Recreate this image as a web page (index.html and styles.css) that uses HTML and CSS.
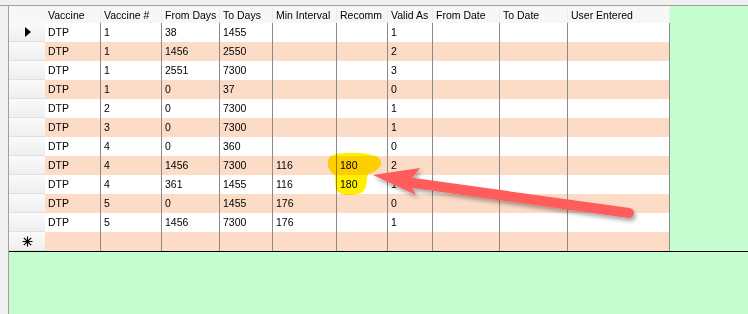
FILE: index.html
```html
<!DOCTYPE html>
<html>
<head>
<meta charset="utf-8">
<link rel="stylesheet" href="styles.css">
</head>
<body>
<div class="window">
  <div class="top-strip"></div>
  <div class="body">
    <div class="left-strip"></div>
    <div class="content">
      <div class="gridwrap">
        <div class="grid">
          <div class="row head">
            <div class="rh corner"></div>
            <div class="hc">Vaccine</div><div class="hc">Vaccine #</div><div class="hc">From Days</div><div class="hc">To Days</div><div class="hc">Min Interval</div><div class="hc">Recomm</div><div class="hc">Valid As</div><div class="hc">From Date</div><div class="hc">To Date</div><div class="hc">User Entered</div>
          </div>
          <div class="row"><div class="rh"><span class="tri"></span></div><div class="c">DTP</div><div class="c">1</div><div class="c">38</div><div class="c">1455</div><div class="c"></div><div class="c"></div><div class="c">1</div><div class="c"></div><div class="c"></div><div class="c"></div></div>
          <div class="row alt"><div class="rh"></div><div class="c">DTP</div><div class="c">1</div><div class="c">1456</div><div class="c">2550</div><div class="c"></div><div class="c"></div><div class="c">2</div><div class="c"></div><div class="c"></div><div class="c"></div></div>
          <div class="row"><div class="rh"></div><div class="c">DTP</div><div class="c">1</div><div class="c">2551</div><div class="c">7300</div><div class="c"></div><div class="c"></div><div class="c">3</div><div class="c"></div><div class="c"></div><div class="c"></div></div>
          <div class="row alt"><div class="rh"></div><div class="c">DTP</div><div class="c">1</div><div class="c">0</div><div class="c">37</div><div class="c"></div><div class="c"></div><div class="c">0</div><div class="c"></div><div class="c"></div><div class="c"></div></div>
          <div class="row"><div class="rh"></div><div class="c">DTP</div><div class="c">2</div><div class="c">0</div><div class="c">7300</div><div class="c"></div><div class="c"></div><div class="c">1</div><div class="c"></div><div class="c"></div><div class="c"></div></div>
          <div class="row alt"><div class="rh"></div><div class="c">DTP</div><div class="c">3</div><div class="c">0</div><div class="c">7300</div><div class="c"></div><div class="c"></div><div class="c">1</div><div class="c"></div><div class="c"></div><div class="c"></div></div>
          <div class="row"><div class="rh"></div><div class="c">DTP</div><div class="c">4</div><div class="c">0</div><div class="c">360</div><div class="c"></div><div class="c"></div><div class="c">0</div><div class="c"></div><div class="c"></div><div class="c"></div></div>
          <div class="row alt"><div class="rh"></div><div class="c">DTP</div><div class="c">4</div><div class="c">1456</div><div class="c">7300</div><div class="c">116</div><div class="c">180</div><div class="c">2</div><div class="c"></div><div class="c"></div><div class="c"></div></div>
          <div class="row"><div class="rh"></div><div class="c">DTP</div><div class="c">4</div><div class="c">361</div><div class="c">1455</div><div class="c">116</div><div class="c">180</div><div class="c">1</div><div class="c"></div><div class="c"></div><div class="c"></div></div>
          <div class="row alt"><div class="rh"></div><div class="c">DTP</div><div class="c">5</div><div class="c">0</div><div class="c">1455</div><div class="c">176</div><div class="c"></div><div class="c">0</div><div class="c"></div><div class="c"></div><div class="c"></div></div>
          <div class="row"><div class="rh"></div><div class="c">DTP</div><div class="c">5</div><div class="c">1456</div><div class="c">7300</div><div class="c">176</div><div class="c"></div><div class="c">1</div><div class="c"></div><div class="c"></div><div class="c"></div></div>
          <div class="row alt"><div class="rh"><svg class="star" width="11" height="11" viewBox="0 0 11 11"><path d="M5.5 0.5v10M0.5 5.5h10M1.8 1.8l7.4 7.4M9.2 1.8l-7.4 7.4" stroke="#000" stroke-width="1.2"/></svg></div><div class="c"></div><div class="c"></div><div class="c"></div><div class="c"></div><div class="c"></div><div class="c"></div><div class="c"></div><div class="c"></div><div class="c"></div><div class="c"></div></div>
        </div>
      </div>
      <div class="bottom"></div>
    </div>
  </div>
  <svg class="annot" width="748" height="314" viewBox="0 0 748 314">
    <defs>
      <filter id="sh" x="-10%" y="-50%" width="130%" height="200%">
        <feDropShadow dx="2" dy="3" stdDeviation="2" flood-color="#000" flood-opacity="0.35"/>
      </filter>
    </defs>
    <path class="hl" d="M331 156 C338 151 372 152 379 158 C384 163 380 171 368 174 C366 180 368 189 361 193 C353 196 341 196 337 191 C334 185 336 179 335 175 C328 172 325 160 331 156 Z"/>
    <g filter="url(#sh)">
      <line x1="406" y1="182" x2="629" y2="213" stroke="#ff5b5b" stroke-width="10" stroke-linecap="round"/>
      <polygon points="373,175 420,168 409,182 416,195" fill="#ff5b5b"/>
    </g>
  </svg>
</div>
</body>
</html>
```
FILE: styles.css
```css
* { box-sizing: border-box; }
html, body { margin: 0; padding: 0; }
body {
  font-family: "Liberation Sans", Arial, sans-serif;
  font-size: 10.5px;
  color: #000;
  background: #f0f0f0;
}
.window {
  position: relative;
  width: 748px;
  height: 314px;
  overflow: hidden;
  display: flex;
  flex-direction: column;
  background: #f0f0f0;
}
.top-strip {
  height: 6px;
  flex: none;
  border-bottom: 1px solid #a0a0a0;
}
.body {
  flex: 1;
  display: flex;
}
.left-strip {
  width: 9px;
  flex: none;
  border-right: 1px solid #a0a0a0;
}
.content {
  flex: 1;
  display: flex;
  flex-direction: column;
  background: #c5fdd0;
}
.gridwrap {
  height: 246px;
  flex: none;
  border-bottom: 1px solid #000;
}
.grid {
  width: 661px;
}
.row {
  display: grid;
  grid-template-columns: 36px 56px 61px 58px 53px 64px 51px 45px 67px 68px 102px;
  height: 19px;
  background: #fff;
}
.row.alt { background: #fddcc7; }
.row.head {
  height: 17px;
  background: #f7f7f7;
}
.rh {
  background: linear-gradient(#fafafa, #efefef);
  border-bottom: 1px solid #e0e0e0;
  display: flex;
  align-items: center;
  justify-content: center;
}
.rh.corner { border-bottom: none; background: #f7f7f7; }
.hc {
  padding: 3px 0 0 3px;
  line-height: 12px;
  white-space: nowrap;
  overflow: hidden;
  border-right: 1px solid #ececec;
}
.c {
  padding-left: 3px;
  line-height: 19px;
  border-right: 1px solid #8a8a8a;
  white-space: nowrap;
}
.tri {
  width: 0;
  height: 0;
  border-top: 5px solid transparent;
  border-bottom: 5px solid transparent;
  border-left: 6px solid #000;
  margin-left: 1px;
}
.star { display: block; }
.annot {
  position: absolute;
  left: 0;
  top: 0;
  pointer-events: none;
}
.hl {
  fill: #fff000;
  mix-blend-mode: multiply;
}
```
